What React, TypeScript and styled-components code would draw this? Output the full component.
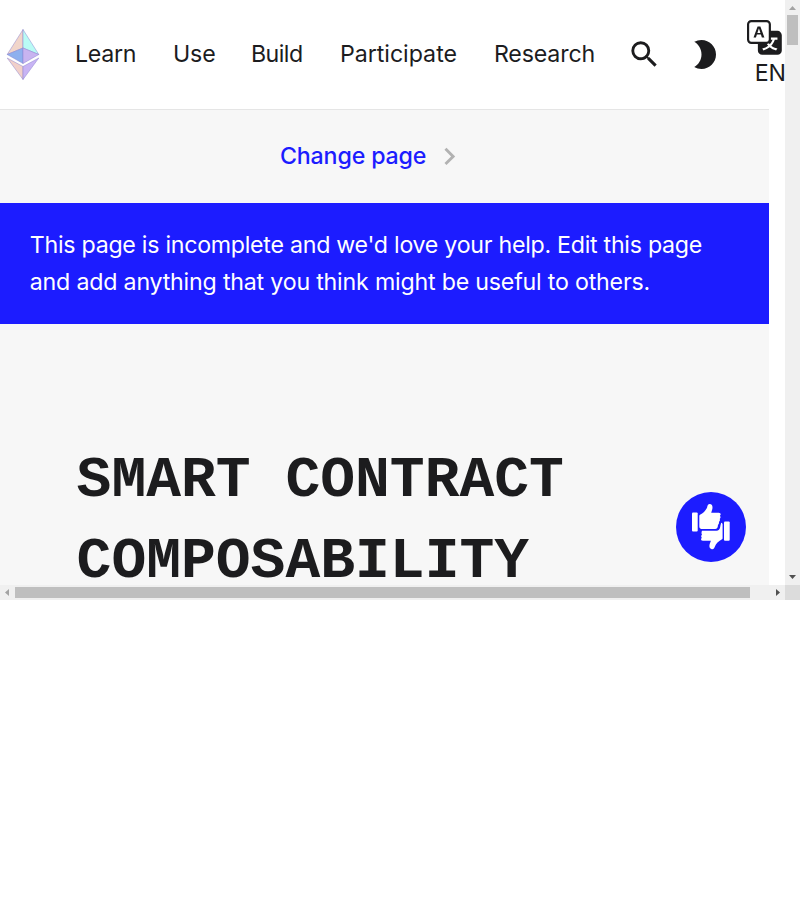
import React from "react";
import styled, { createGlobalStyle } from "styled-components";
import { MdSearch, MdBrightness2, MdChevronRight } from "react-icons/md";
import { BsTranslate } from "react-icons/bs";

const GlobalStyle = createGlobalStyle`
  * { box-sizing: border-box; }
  body {
    margin: 0;
    background: #fff;
    color: #1c1c1e;
    font-family: Inter, "Liberation Sans", sans-serif;
    font-size: 23.2px;
    font-weight: 400;
    line-height: 1.6;
  }
`;

const Frame = styled.div`
  display: grid;
  grid-template-columns: 785px 15px;
  grid-template-rows: 585px 15px;
  width: 800px;
  height: 600px;
`;

const Viewport = styled.div`
  position: relative;
  overflow: hidden;
  background: #fff;
`;

const Page = styled.div`
  width: 769px;
  height: 585px;
  background: #f7f7f7;
`;

const Header = styled.header`
  display: flex;
  align-items: center;
  height: 110px;
  padding-left: 5.8px;
  background: #fff;
  border-bottom: 1px solid #e5e5e5;
`;

const Logo = styled.svg`
  flex: none;
  width: 34px;
  height: 52px;
  margin: 0 35.2px 0 0;
`;

const Nav = styled.nav`
  display: flex;
  flex: none;
  width: 520.6px;
`;

const NavLink = styled.a<{ $width: number; $tracking: number }>`
  flex: none;
  width: ${(p) => p.$width}px;
  color: #1c1c1e;
  letter-spacing: ${(p) => p.$tracking}px;
  white-space: nowrap;
`;

const IconButton = styled.button<{ $gap: number }>`
  display: flex;
  flex: none;
  margin: 0 0 0 ${(p) => p.$gap}px;
  padding: 0;
  border: 0;
  background: none;
  color: #1c1c1e;
  font-size: 34.8px;
`;

const Language = styled.a`
  display: flex;
  flex: none;
  flex-direction: column;
  width: 50px;
  height: 72px;
  margin-left: 25px;
  margin-top: 3px;
  font-size: 34.8px;
  line-height: 1;
`;

const LanguageCode = styled.span`
  margin-left: 7.7px;
  font-size: 23.2px;
  line-height: 36px;
  letter-spacing: -0.4px;
`;

const ChangePage = styled.div`
  display: flex;
  align-items: center;
  justify-content: center;
  height: 93px;
  padding-right: 22px;
  color: #1c1cff;
  font-weight: 500;
  letter-spacing: -0.14px;
  svg { margin-left: 6px; font-size: 34.8px; color: #b2b2b2; }
`;

const Banner = styled.div`
  height: 121px;
  padding: 24px 29.8px 0;
  background: #1c1cff;
  color: #fff;
`;

const BannerLine = styled.span<{ $tracking: number }>`
  letter-spacing: ${(p) => p.$tracking}px;
`;

const Title = styled.h1`
  margin: 0;
  padding: 116px 76.6px 0;
  font: 700 58px/81.2px "Liberation Mono", monospace;
  text-transform: uppercase;
`;

const Feedback = styled.button`
  position: absolute;
  left: 676px;
  top: 492px;
  width: 70px;
  height: 70px;
  padding: 0;
  border: 0;
  border-radius: 50%;
  background: #1c1cff;
  svg { display: block; }
`;

const ScrollBar = styled.div<{ $vertical?: boolean }>`
  display: flex;
  flex-direction: ${(p) => (p.$vertical ? "column" : "row")};
  justify-content: space-between;
  background: #f0f0f0;
`;

const Arrow = styled.svg`
  flex: none;
  width: 15px;
  height: 15px;
`;

const Track = styled.div<{ $vertical?: boolean }>`
  flex: 1;
  padding: ${(p) => (p.$vertical ? "0 2px" : "2px 0")};
`;

const Thumb = styled.div<{ $w: number; $h: number }>`
  width: ${(p) => p.$w}px;
  height: ${(p) => p.$h}px;
  background: #bfbfbf;
`;

const Corner = styled.div`
  background: #dcdcdc;
`;

const EthLogo = () => (
  <Logo viewBox="0 0 34 52">
    <g stroke="#8a80cf" strokeOpacity=".6" strokeWidth=".8" strokeLinejoin="round">
      <path d="M17 .5 1.2 25.5 17 19Z" fill="#f1d5ca" />
      <path d="M17 .5V19l15.8 6.5Z" fill="#b9fbf5" />
      <path d="M17 19 1.2 25.5 17 34.5Z" fill="#8eb0ee" />
      <path d="m17 19 15.8 6.5L17 34.5Z" fill="#c8b4f0" />
      <path d="M1.2 29 17 37.5V50.5Z" fill="#f1d0ca" />
      <path d="M32.8 29 17 37.5V50.5Z" fill="#c8b4f4" />
    </g>
  </Logo>
);

const ThumbsIcon = () => (
  <svg width="70" height="70" viewBox="0 0 70 70" fill="#fff">
    <rect x="16" y="20.5" width="5.7" height="19" rx="1" />
    <rect x="48" y="29.5" width="5.7" height="19.3" rx="1" />
    <path d="M24 22.8c3.2-1.5 5.7-4.2 7.1-7.3.4-.9.3-3.4 2.4-3.5 3-.1 3.4 3 2.7 5.5L35.2 20.7h7.5c2.2 0 2.5 2 1.2 3 .9 1 .9 2.3-.2 3.2.6 1.1.2 2.4-.8 3 .4 1.3-.1 2.4-1 3.1.2 2.2-.7 4.1-2.8 4.1H26.5c-1.8 0-3.2-1-3.2-2.7V24c0-.6.2-1 .7-1.2Z" />
    <path d="M26 38.8h14.5c2 0 3.4-1.7 3.7-3.8.1-1 .8-3.2.9-4.2 1.2.2 1.5.8 1.5 2V46c0 .8-.3 1.2-1 1.6-3.2 1.7-5.6 4.2-6.8 7.1-.7 1.7-1.2 2.8-3 2.5-2.7-.5-2.7-3.4-1.9-5.6l1-2.8H27c-2.2 0-2.5-2-1.2-3-.9-1-.7-2.5.2-3-.7-1.2-.6-2.9 0-4Z" />
  </svg>
);

const NAV_ITEMS = [
  { label: "Learn", width: 97.9, tracking: -0.3 },
  { label: "Use", width: 78, tracking: -0.1 },
  { label: "Build", width: 89, tracking: -0.5 },
  { label: "Participate", width: 154, tracking: -0.02 },
  { label: "Research", width: 101.7, tracking: -0.15 },
];

export default function App() {
  return (
    <>
      <GlobalStyle />
      <Frame>
        <Viewport>
          <Page>
            <Header>
              <EthLogo />
              <Nav>
                {NAV_ITEMS.map(({ label, width, tracking }) => (
                  <NavLink key={label} $width={width} $tracking={tracking}>{label}</NavLink>
                ))}
              </Nav>
              <IconButton $gap={31.5} aria-label="Search"><MdSearch /></IconButton>
              <IconButton $gap={25.5} aria-label="Dark mode"><MdBrightness2 /></IconButton>
              <Language>
                <BsTranslate />
                <LanguageCode>EN</LanguageCode>
              </Language>
            </Header>
            <ChangePage>
              Change page
              <MdChevronRight />
            </ChangePage>
            <Banner>
              <BannerLine $tracking={-0.27}>This page is incomplete and we'd love your help. Edit this page</BannerLine>
              <br />
              <BannerLine $tracking={-0.2}>and add anything that you think might be useful to others.</BannerLine>
            </Banner>
            <Title>Smart contract composability</Title>
          </Page>
          <Feedback aria-label="Feedback"><ThumbsIcon /></Feedback>
        </Viewport>
        <ScrollBar $vertical>
          <Arrow viewBox="0 0 15 15"><path d="M4 10 7.5 6 11 10Z" fill="#a3a3a3" /></Arrow>
          <Track $vertical><Thumb $w={11} $h={30} /></Track>
          <Arrow viewBox="0 0 15 15"><path d="M4 5h7L7.5 9Z" fill="#505050" /></Arrow>
        </ScrollBar>
        <ScrollBar>
          <Arrow viewBox="0 0 15 15"><path d="M9 4v7L5 7.5Z" fill="#a3a3a3" /></Arrow>
          <Track><Thumb $w={735} $h={11} /></Track>
          <Arrow viewBox="0 0 15 15"><path d="M6 4v7l4-3.5Z" fill="#505050" /></Arrow>
        </ScrollBar>
        <Corner />
      </Frame>
    </>
  );
}
